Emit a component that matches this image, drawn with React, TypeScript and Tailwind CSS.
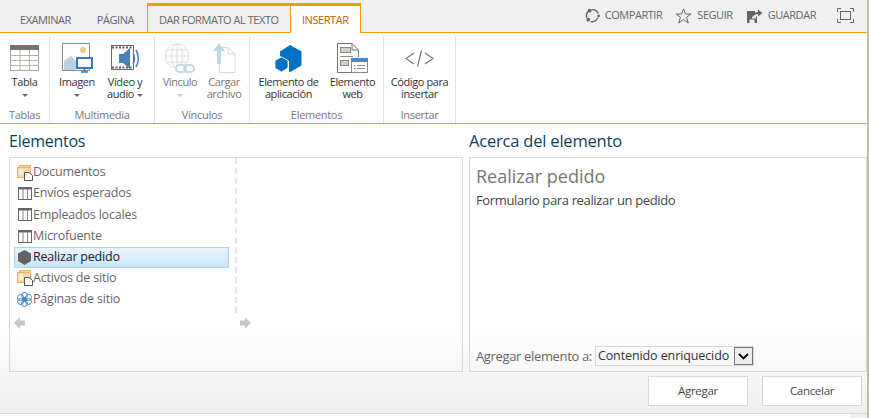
import React from "react";

const font = { fontFamily: '"Open Sans", sans-serif' };

function Caret({ gray }: { gray?: boolean }) {
  return <span className={`inline-block w-0 h-0 border-x-[3px] border-x-transparent border-t-[3px] ${gray ? "border-t-[#c8c8c8]" : "border-t-[#666]"}`} />;
}

function RibbonButton({ icon, lines, caret, w, dim }: { icon: React.ReactNode; lines: string[]; caret?: "below" | "inline"; w: number; dim?: boolean }) {
  return (
    <div className={`flex flex-col items-center shrink-0 ${dim ? "text-[#777]" : "text-[#333]"}`} style={{ width: w }}>
      <div className="h-[36px] flex items-center justify-center">{icon}</div>
      <div className="text-[11px] leading-[11.5px] text-center tracking-[-0.4px] whitespace-nowrap">
        {lines.map((l, i) => (
          <div key={l}>
            {l}
            {caret === "inline" && i === lines.length - 1 ? <span className="ml-[3px] relative top-[-1px] inline-block"><Caret /></span> : null}
          </div>
        ))}
      </div>
      {caret === "below" ? <div className="h-[15px] flex items-center"><Caret gray={dim} /></div> : null}
    </div>
  );
}

function Group({ w, label, children }: { w: number; label: string; children: React.ReactNode }) {
  return (
    <div className="flex flex-col border-r border-[#e1e1e1] shrink-0 h-[87px] mt-[3px]" style={{ width: w }}>
      <div className="flex-1 flex justify-center pt-[4px]">{children}</div>
      <div className="text-[11px] tracking-[-0.3px] text-[#777] text-center h-[17px] leading-[18px]">{label}</div>
    </div>
  );
}

const TableBig = () => (
  <svg width="29" height="26" viewBox="0 0 29 26">
    <rect x="0.5" y="0.5" width="28" height="25" fill="#fff" stroke="#a8a29c" />
    <rect x="0" y="0" width="29" height="5" fill="#77726c" />
    <path d="M0 10.5H29M0 15.5H29M0 20.5H29M10 5V26M19.5 5V26" stroke="#b8b4ae" fill="none" />
  </svg>
);

const ImageIcon = () => (
  <svg width="31" height="31" viewBox="0 0 31 31">
    <rect x="0.5" y="0.5" width="27" height="27" fill="#fff" stroke="#8f8a84" />
    <circle cx="21" cy="7" r="3" fill="#eccb8c" />
    <path d="M2 27V18L9 13L14 18V27Z" fill="#bcd0e4" />
    <rect x="15" y="15" width="15" height="10" fill="#fff" stroke="#2f7dbd" strokeWidth="2" />
    <path d="M19 29H26M22.500 26V29" stroke="#2f7dbd" strokeWidth="1.500" />
  </svg>
);

const VideoIcon = () => (
  <svg width="29" height="28" viewBox="0 0 29 28">
    <rect x="0.5" y="1.500" width="22" height="24" fill="#fff" stroke="#6a6a6a" />
    <path d="M1 3.500H22M1 23.500H22" stroke="#5c5c5c" strokeWidth="2" strokeDasharray="2 1.500" />
    <path d="M8 10H12L19 4V25L12 19H8Z" fill="#4a7fb8" />
    <path d="M22 9C24 12 24 17 22 20M25 6C28 11 28 18 25 23" stroke="#4a7fb8" strokeWidth="1.500" fill="none" />
  </svg>
);

const LinkIcon = () => (
  <svg width="32" height="31" viewBox="0 0 32 31" fill="none">
    <circle cx="13" cy="13" r="12" stroke="#dedede" />
    <ellipse cx="13" cy="13" rx="5.500" ry="12" stroke="#dedede" />
    <path d="M1 13H25M3 7H23M3 19H23M13 1V25" stroke="#dedede" />
    <rect x="12" y="22" width="10" height="7" rx="3.500" stroke="#c5d8ea" strokeWidth="2" fill="#fff" />
    <rect x="20" y="22" width="10" height="7" rx="3.500" stroke="#c5d8ea" strokeWidth="2" />
  </svg>
);

const UploadIcon = () => (
  <svg width="24" height="31" viewBox="0 0 24 31" fill="none">
    <path d="M7.500 4.500H16L23 11V29.500H7.500Z" stroke="#d8d8d8" fill="#fff" />
    <path d="M16 4.500V11H23" stroke="#d8d8d8" />
    <path d="M7 0L13 8H9V21H5V8H1Z" fill="#bcd6ec" />
  </svg>
);

const AppPart = () => (
  <svg width="27" height="27" viewBox="0 0 27 27">
    <path d="M15 0L26.500 6.500V20.500L15 27L14 26.500V16L5 11V6.500Z" fill="#0072c6" />
    <path d="M15 13L26 7V20L15 27Z" fill="#0072c6" />
    <path d="M6.500 12L13 15.500V23L6.500 27L0 23V15.500Z" fill="#0072c6" stroke="#fff" strokeWidth="0.800" />
  </svg>
);

const WebPart = () => (
  <svg width="31" height="30" viewBox="0 0 31 30" fill="none">
    <path d="M14 29.500H0.500V0.500H15L21.500 7V14" stroke="#77726c" fill="#fff" />
    <path d="M15 0.500V7H21.500" stroke="#77726c" />
    <rect x="3.500" y="4.500" width="10" height="5" fill="#cfcfcf" stroke="#8f8a84" />
    <rect x="3.500" y="17.500" width="8" height="5" fill="#cfcfcf" stroke="#8f8a84" />
    <path d="M3 13.500H16" stroke="#8f8a84" />
    <rect x="14.500" y="15.500" width="16" height="14" fill="#fff" stroke="#8f8a84" />
    <rect x="14" y="15" width="17" height="4" fill="#4f86c0" />
    <path d="M17 22.500H18.500M20 22.500H28M17 25.500H18.500M20 25.500H28" stroke="#8f8a84" />
  </svg>
);

const CodeIcon = () => (
  <svg width="29" height="17" viewBox="0 0 29 17" fill="none" stroke="#77726c" strokeWidth="1.100">
    <path d="M9 3L1 8.500L9 14" />
    <path d="M20 3L28 8.500L20 14" />
    <path d="M16.500 0.500L12.500 16.500" />
  </svg>
);

const Share = () => (
  <svg width="15" height="15" viewBox="0 0 16 16" fill="none">
    <path d="M2 10.500A7 7 0 0 1 4 3M7 1.800A6.500 6.500 0 0 1 14 6M13.500 10.500A6.500 6.500 0 0 1 6 14.500" stroke="#666" strokeWidth="1.500" />
    <circle cx="5" cy="2.800" r="2" fill="#666" />
    <circle cx="14.500" cy="8.500" r="1.500" fill="#666" />
    <circle cx="3.500" cy="12.500" r="2" fill="#666" />
  </svg>
);

const Star = () => (
  <svg width="17" height="16" viewBox="0 0 17 16" fill="none">
    <path d="M8.500 1L10.500 6H16L11.500 9.300L13.300 15L8.500 11.500L3.700 15L5.500 9.300L1 6H6.500Z" stroke="#666" />
  </svg>
);

const Save = () => (
  <svg width="17" height="16" viewBox="0 0 17 16">
    <path d="M1 3H9V6.500C7 7 6 8.500 6 10.500H10V8L11 8.500V15H1Z" fill="#666" />
    <rect x="3.500" y="11.500" width="5" height="3.500" fill="#f0f0f0" />
    <path d="M7 9C7 5.500 9.500 4 12 4V1.500L16.500 5L12 8.500V6C10 6 8 7 7 9Z" fill="#666" />
  </svg>
);

const Focus = () => (
  <svg width="17" height="15" viewBox="0 0 17 15" fill="none" stroke="#666">
    <path d="M0.500 4V0.500H4M13 0.500H16.500V4M16.500 11V14.500H13M4 14.500H0.500V11" />
    <rect x="3.500" y="3.500" width="10" height="8" />
  </svg>
);

const FolderIcon = () => (
  <svg width="16" height="16" viewBox="0 0 16 16">
    <rect x="2.500" y="0.500" width="11" height="2" fill="#f3d9a8" stroke="#e3b564" />
    <rect x="0.500" y="2.500" width="13" height="10" fill="#f3d9a8" stroke="#e3b564" />
    <path d="M2 5H6M2 7H6M2 9H6" stroke="#fff" />
    <path d="M7.500 7.500H12L15.500 10.500V15.500H7.500Z" fill="#fff" stroke="#555" />
  </svg>
);

const ListIcon = () => (
  <svg width="14" height="13" viewBox="0 0 14 13" fill="none">
    <rect x="0.500" y="0.500" width="13" height="12" stroke="#666" fill="#fff" />
    <path d="M0 1.500H14" stroke="#666" strokeWidth="2" />
    <path d="M5 2V12M9.500 2V12" stroke="#888" />
  </svg>
);

const HexIcon = () => (
  <svg width="15" height="15" viewBox="0 0 15 15"><path d="M7.500 0L14 3.500V11L7.500 15L1 11V3.500Z" fill="#636363" /></svg>
);

const PagesIcon = () => (
  <svg width="15" height="15" viewBox="0 0 15 15" fill="none" stroke="#3f86c4">
    <circle cx="7.500" cy="3.500" r="3" /><circle cx="7.500" cy="11.500" r="3" /><circle cx="3.500" cy="5.500" r="3" /><circle cx="11.500" cy="5.500" r="3" /><circle cx="3.500" cy="9.500" r="3" /><circle cx="11.500" cy="9.500" r="3" />
    <circle cx="7.500" cy="7.500" r="2" fill="#3f86c4" />
  </svg>
);

const Arrow = ({ right }: { right?: boolean }) => (
  <svg width="12" height="12" viewBox="0 0 12 12" style={right ? { transform: "scaleX(-1)" } : undefined}>
    <path d="M6 0V3.500H11V8.500H6V12L0 6Z" fill="#c8c8c8" />
  </svg>
);

const items: [string, React.ReactNode][] = [
  ["Documentos", <FolderIcon />],
  ["Envíos esperados", <ListIcon />],
  ["Empleados locales", <ListIcon />],
  ["Microfuente", <ListIcon />],
  ["Realizar pedido", <HexIcon />],
  ["Activos de sitio", <FolderIcon />],
  ["Páginas de sitio", <PagesIcon />],
];

export default function App() {
  return (
    <div className="w-[869px] h-[418px] bg-white flex overflow-hidden" style={font}>
      <div className="w-[867px] flex flex-col shrink-0">
        <div className="flex-1 flex flex-col min-h-0">
          {/* tab strip */}
          <div className="h-[33px] bg-[#f0f0f0] border-b border-[#f49b00] flex items-stretch shrink-0 text-[#666] text-[11px] tracking-[-0.45px]">
            <div className="w-[147px] flex shrink-0">
              <span className="ml-[20px] mt-[12px] leading-[15px]">EXAMINAR</span>
              <span className="ml-[26px] mt-[12px] leading-[15px]">PÁGINA</span>
            </div>
            <div className="mt-[3px] w-[144px] h-[30px] border-t-[3px] border-x border-b border-[#f49b00] shrink-0 pl-[11px] pt-[6px] leading-[15px] whitespace-nowrap">DAR FORMATO AL TEXTO</div>
            <div className="mt-[3px] w-[70px] h-[30px] border-t-[3px] border-r border-[#f49b00] bg-white text-[#c85a00] shrink-0 pl-[11px] pt-[6px] leading-[15px] relative z-10">INSERTAR</div>
            <div className="flex-1 flex items-center justify-end pb-[1px] pr-[13px]">
              <Share /><span className="ml-[5px] mr-[13px]">COMPARTIR</span>
              <Star /><span className="ml-[5px] mr-[13px]">SEGUIR</span>
              <Save /><span className="ml-[5px] mr-[21px]">GUARDAR</span>
              <Focus />
            </div>
          </div>
          {/* ribbon */}
          <div className="h-[91px] border-b border-[#f49b00] flex shrink-0 bg-white">
            <Group w={50} label="Tablas"><RibbonButton w={46} icon={<TableBig />} lines={["Tabla"]} caret="below" /></Group>
            <Group w={105} label="Multimedia">
              <RibbonButton w={46} icon={<ImageIcon />} lines={["Imagen"]} caret="below" />
              <RibbonButton w={50} icon={<VideoIcon />} lines={["Vídeo y", "audio"]} caret="inline" />
            </Group>
            <Group w={95} label="Vínculos">
              <RibbonButton w={44} dim icon={<LinkIcon />} lines={["Vínculo"]} caret="below" />
              <RibbonButton w={44} dim icon={<UploadIcon />} lines={["Cargar", "archivo"]} />
            </Group>
            <Group w={134} label="Elementos">
              <RibbonButton w={72} icon={<AppPart />} lines={["Elemento de", "aplicación"]} />
              <RibbonButton w={56} icon={<WebPart />} lines={["Elemento", "web"]} />
            </Group>
            <Group w={72} label="Insertar">
              <RibbonButton w={70} icon={<CodeIcon />} lines={["Código para", "insertar"]} />
            </Group>
          </div>
          {/* body */}
          <div className="flex-1 min-h-0 bg-gradient-to-b from-white from-[70%] to-[#efefef] pl-[9px] flex flex-col">
            <div className="flex gap-[6px] h-[248px] shrink-0">
              <div className="w-[454px] flex flex-col shrink-0">
                <div className="text-[#0f3f5f] text-[16px] leading-[20px] tracking-[-0.25px] pt-[7px] h-[33px]">Elementos</div>
                <div className="flex-1 border border-[#d9d9d9] flex flex-col pt-[4px] pl-[4px]">
                  <div className="flex">
                    <div className="w-[221px]">
                      {items.map(([label, icon]) => {
                        const sel = label === "Realizar pedido";
                        return (
                          <div key={label} className={`h-[21.17px] w-[215px] flex items-center border text-[12.500px] tracking-[-0.2px] whitespace-nowrap ${sel ? "border-[#a9d3f0] bg-gradient-to-b from-[#eaf5fd] to-[#c9e5fa] text-[#222]" : "border-transparent text-[#666]"}`}>
                            <span className="w-[17px] shrink-0 flex justify-center ml-[1px]">{icon}</span>
                            {label}
                          </div>
                        );
                      })}
                    </div>
                    <div className="border-l-2 border-dashed border-[#e4e2f7] h-[155px] -mt-[4px]" />
                  </div>
                  <div className="flex mt-[4px]">
                    <div className="w-[225px]"><Arrow /></div>
                    <Arrow right />
                  </div>
                </div>
              </div>
              <div className="w-[398px] flex flex-col shrink-0">
                <div className="text-[#0f3f5f] text-[16.500px] leading-[20px] tracking-[-0.2px] pt-[7px] h-[33px]">Acerca del elemento</div>
                <div className="flex-1 border border-[#d9d9d9] flex flex-col px-[6px]">
                  <div className="text-[18px] text-[#777] leading-[20px] mt-[8px]">Realizar pedido</div>
                  <div className="text-[13px] text-[#444] tracking-[-0.35px] leading-[16px] mt-[6px]">Formulario para realizar un pedido</div>
                  <div className="mt-auto mb-[5px] flex items-center text-[13px] text-[#666] tracking-[-0.35px]">
                    <span className="mr-[3px] leading-[16px]">Agregar elemento a:</span>
                    <div className="w-[159px] h-[20px] border border-[#d9d9d9] flex items-center justify-between text-[#333] text-[12.500px] tracking-[-0.1px] pl-[2px] leading-[16px] whitespace-nowrap">
                      Contenido enriquecido
                      <span className="w-[19px] h-[18px] border border-[#777] bg-[#eee] flex items-center justify-center shrink-0">
                        <svg width="11" height="7" viewBox="0 0 11 7" fill="none"><path d="M1 1L5.500 5.500L10 1" stroke="#000" strokeWidth="1.800" /></svg>
                      </span>
                    </div>
                  </div>
                </div>
              </div>
            </div>
            <div className="flex justify-end gap-[14px] mt-[4px] pr-[5px] text-[11.500px] text-[#444] tracking-[-0.3px]">
              <button className="w-[100px] h-[30px] bg-white border border-[#d9d9d9]">Agregar</button>
              <button className="w-[100px] h-[30px] bg-white border border-[#d9d9d9]">Cancelar</button>
            </div>
          </div>
        </div>
        <div className="h-[5px] shrink-0 border-t border-[#d9d9d9] flex">
          <div className="w-[850px] bg-white" />
          <div className="flex-1 bg-[#f0f0f0]" />
        </div>
      </div>
      <div className="w-[2px] bg-[#b9c5a0] shrink-0" />
    </div>
  );
}
